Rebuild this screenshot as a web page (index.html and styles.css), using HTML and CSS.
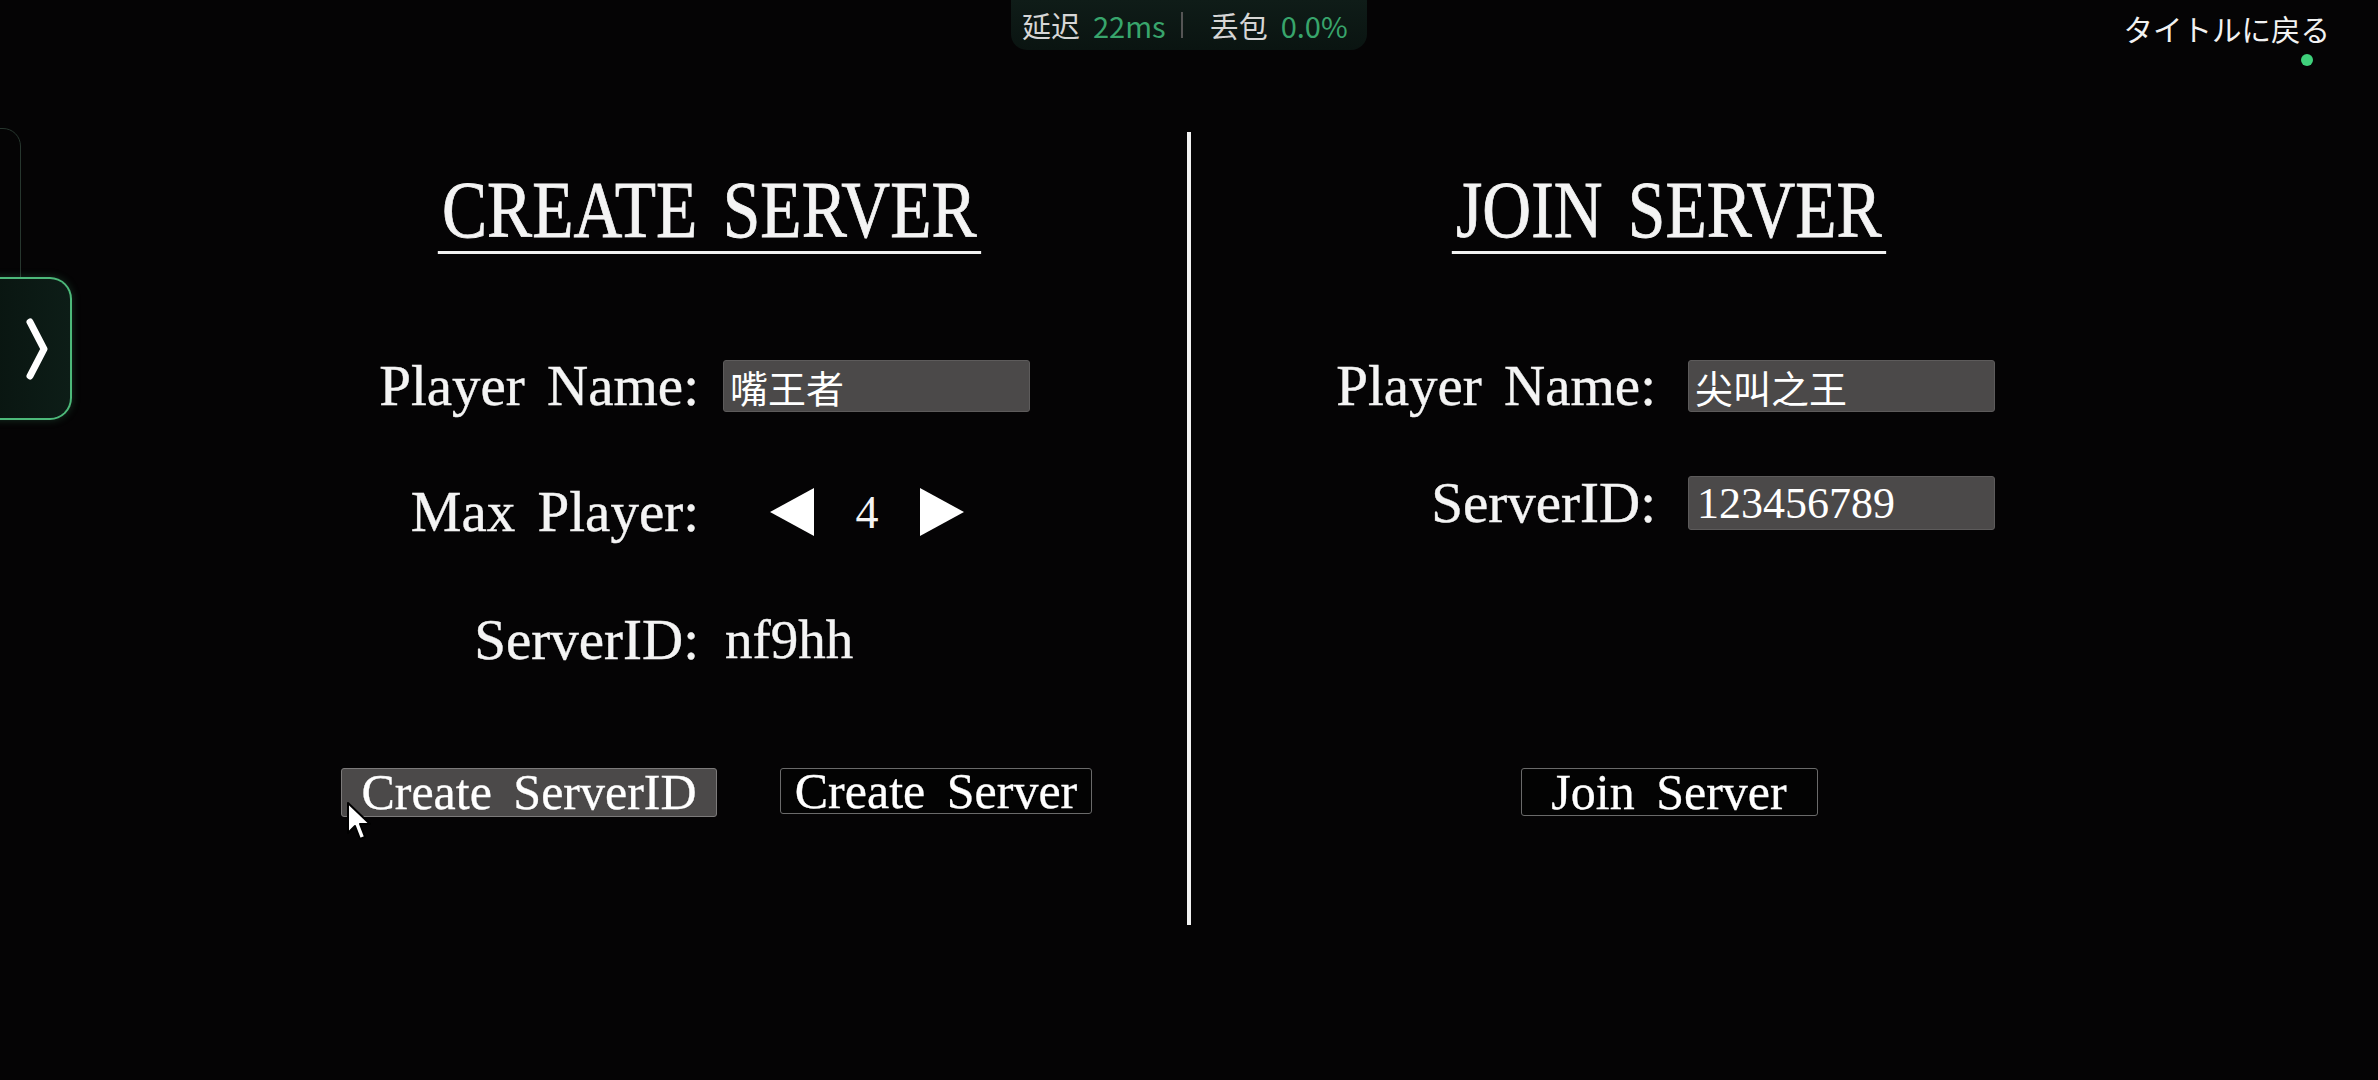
FILE: index.html
```html
<!DOCTYPE html>
<html lang="zh">
<head>
  <meta charset="UTF-8" />
  <meta name="viewport" content="width=device-width, initial-scale=1.0" />
  <title>Server Lobby</title>
  <link rel="stylesheet" href="styles.css">
</head>
<body>
  <!-- network overlay -->
  <div class="net-stats">
    <span class="net-label">延迟</span>
    <span class="net-value">22ms</span>
    <span class="net-sep"></span>
    <span class="net-label">丢包</span>
    <span class="net-value">0.0%</span>
  </div>

  <a href="#" class="back-link">タイトルに戻る</a>
  <span class="status-dot"></span>

  <div class="side-panel"></div>
  <button class="side-toggle" aria-label="open">
    <svg width="22" height="62" viewBox="0 0 22 62"><path d="M4 4 L18 31 L4 58" fill="none" stroke="#fff" stroke-width="7" stroke-linecap="round" stroke-linejoin="round"/></svg>
  </button>

  <main class="lobby">
    <section class="panel panel-create">
      <h2 class="panel-title">CREATE SERVER</h2>

      <div class="field-row first">
        <label class="field-label">Player Name:</label>
        <input class="text-input cjk" type="text" value="嘴王者">
      </div>

      <div class="field-row">
        <span class="field-label">Max Player:</span>
        <div class="stepper">
          <svg class="arrow" width="44" height="48" viewBox="0 0 44 48"><polygon points="0,24 44,0 44,48" fill="#fff"/></svg>
          <span class="stepper-value">4</span>
          <svg class="arrow" width="44" height="48" viewBox="0 0 44 48"><polygon points="44,24 0,0 0,48" fill="#fff"/></svg>
        </div>
      </div>

      <div class="field-row third">
        <span class="field-label">ServerID:</span>
        <span class="field-value">nf9hh</span>
      </div>

      <div class="actions actions-create">
        <button class="btn btn-active btn-id">Create ServerID</button>
        <button class="btn btn-create">Create Server</button>
      </div>
    </section>

    <div class="divider"></div>

    <section class="panel panel-join">
      <h2 class="panel-title">JOIN SERVER</h2>

      <div class="field-row first">
        <label class="field-label">Player Name:</label>
        <input class="text-input cjk" type="text" value="尖叫之王">
      </div>

      <div class="field-row join-id">
        <label class="field-label">ServerID:</label>
        <input class="text-input digits" type="text" value="123456789">
      </div>

      <div class="actions actions-join">
        <button class="btn btn-join">Join Server</button>
      </div>
    </section>
  </main>

  <svg class="cursor" width="26" height="42" viewBox="0 0 26 42">
    <path d="M2 2 L2 32 L9 25 L14 38 L19 36 L14 23 L24 23 Z" fill="#fff" stroke="#000" stroke-width="2" stroke-linejoin="round"/>
  </svg>
</body>
</html>
```

FILE: styles.css
```css
:root {
  --text: #f4f4f4;
  --field: #4b4949;
  --green: #38a56c;
}
html, body {
  margin: 0; padding: 0;
  width: 100%; height: 100vh;
  background: #050405;
  color: var(--text);
  font-family: 'Liberation Serif', 'Times New Roman', serif;
  overflow: hidden;
}

/* Network stats pill */
.net-stats {
  position: absolute;
  top: 0;
  left: 50%;
  transform: translateX(-50%);
  width: 356px;
  height: 50px;
  box-sizing: border-box;
  padding: 0 8px 0 11px;
  display: flex;
  align-items: center;
  background: linear-gradient(180deg, #0f1c18 0%, #0a1411 100%);
  border-radius: 0 0 16px 16px;
  font-family: 'Noto Sans CJK SC', 'Noto Sans', sans-serif;
  font-size: 29px;
}
.net-label { color: #d6d6d6; }
.net-value { color: var(--green); margin-left: 13px; }
.net-sep {
  width: 2px; height: 26px;
  background: #555;
  margin: 0 27px 0 15px;
}

/* Top right link */
.back-link {
  position: absolute;
  top: 7px;
  right: 48px;
  color: #f2f2f2;
  text-decoration: none;
  font-family: 'Noto Sans CJK JP', sans-serif;
  font-size: 29.5px;
}
.status-dot {
  position: absolute;
  top: 54px;
  left: 2301px;
  width: 12px; height: 12px;
  border-radius: 50%;
  background: #3fd07b;
}

/* Left drawer */
.side-panel {
  position: absolute;
  left: -40px; top: 128px;
  width: 59px; height: 222px;
  border: 1px solid #27362e;
  border-radius: 18px;
}
.side-toggle {
  position: absolute;
  left: -32px; top: 277px;
  width: 104px; height: 143px;
  padding: 0 0 0 56px;
  box-sizing: border-box;
  background: linear-gradient(90deg, #08130f 0%, #0d1d17 100%);
  border: 2px solid #4db97a;
  border-left-color: #1d3a2a;
  border-radius: 22px;
  box-shadow: 0 0 8px rgba(77,185,122,0.25);
  display: flex;
  align-items: center;
  cursor: pointer;
}

/* Main layout */
.lobby {
  display: grid;
  grid-template-columns: 956px 4px 956px;
  justify-content: center;
  padding-top: 132px;
}
.divider {
  background: #f2f2f2;
  height: 793px;
}
.panel {
  display: flex;
  flex-direction: column;
  align-items: center;
}
.panel-title {
  margin: 38px 0 0;
  padding: 0 5px 1px;
  font-size: 80px;
  font-weight: 400;
  line-height: 80px;
  word-spacing: 10px;
  border-bottom: 3px solid #f2f2f2;
  transform: scaleX(0.845);
  -webkit-text-stroke: 0.8px #f4f4f4;
}

/* Form rows */
.field-row {
  width: 100%;
  height: 60px;
  display: grid;
  grid-template-columns: 468px 1fr;
  column-gap: 24px;
  align-items: center;
  margin-top: 66px;
}
.panel-join .field-row {
  grid-template-columns: 465px 1fr;
  column-gap: 32px;
}
.field-row.first { margin-top: 102px; }
.field-row.third { margin-top: 68px; }
.field-row.join-id { margin-top: 57px; }

.field-label {
  text-align: right;
  font-size: 57px;
  line-height: 60px;
  word-spacing: 8px;
  white-space: nowrap;
  -webkit-text-stroke: 0.4px #f4f4f4;
}
.field-value {
  font-size: 55px;
  line-height: 60px;
  padding-left: 2px;
  -webkit-text-stroke: 0.4px #f4f4f4;
}
.text-input {
  width: 307px;
  height: 52px;
  box-sizing: border-box;
  padding: 0 6px;
  background: var(--field);
  border: 1px solid #5d5b5b;
  border-radius: 3px;
  color: #fff;
  outline: none;
}
.text-input.cjk {
  font-family: 'Noto Sans CJK SC', sans-serif;
  font-size: 38px;
}
.text-input.digits {
  height: 54px;
  font-family: 'Liberation Serif', serif;
  font-size: 44px;
  padding-left: 8px;
}

/* Stepper */
.stepper {
  display: flex;
  align-items: center;
  padding-left: 47px;
}
.arrow { display: block; }
.stepper-value {
  width: 106px;
  text-align: center;
  font-size: 46px;
}

/* Buttons */
.actions {
  display: flex;
  align-items: flex-start;
  gap: 63px;
}
.actions-create { margin-top: 98px; padding-left: 15px; }
.actions-join { margin-top: 235px; }
.btn {
  box-sizing: border-box;
  padding: 0;
  font-family: 'Liberation Serif', serif;
  font-size: 50px;
  word-spacing: 9px;
  color: #fff;
  background: #030303;
  border: 1px solid #6a6a6a;
  border-radius: 3px;
  text-align: center;
  cursor: pointer;
  -webkit-text-stroke: 0.3px #fff;
}
.btn-id { width: 376px; height: 49px; line-height: 47px; }
.btn-create { width: 312px; height: 46px; line-height: 44px; }
.btn-join { width: 297px; height: 48px; line-height: 46px; }
.btn-active {
  background: var(--field);
  border-color: #7c7a7a;
}

/* Mouse pointer in the capture */
.cursor {
  position: absolute;
  left: 346px;
  top: 801px;
  pointer-events: none;
}
```
